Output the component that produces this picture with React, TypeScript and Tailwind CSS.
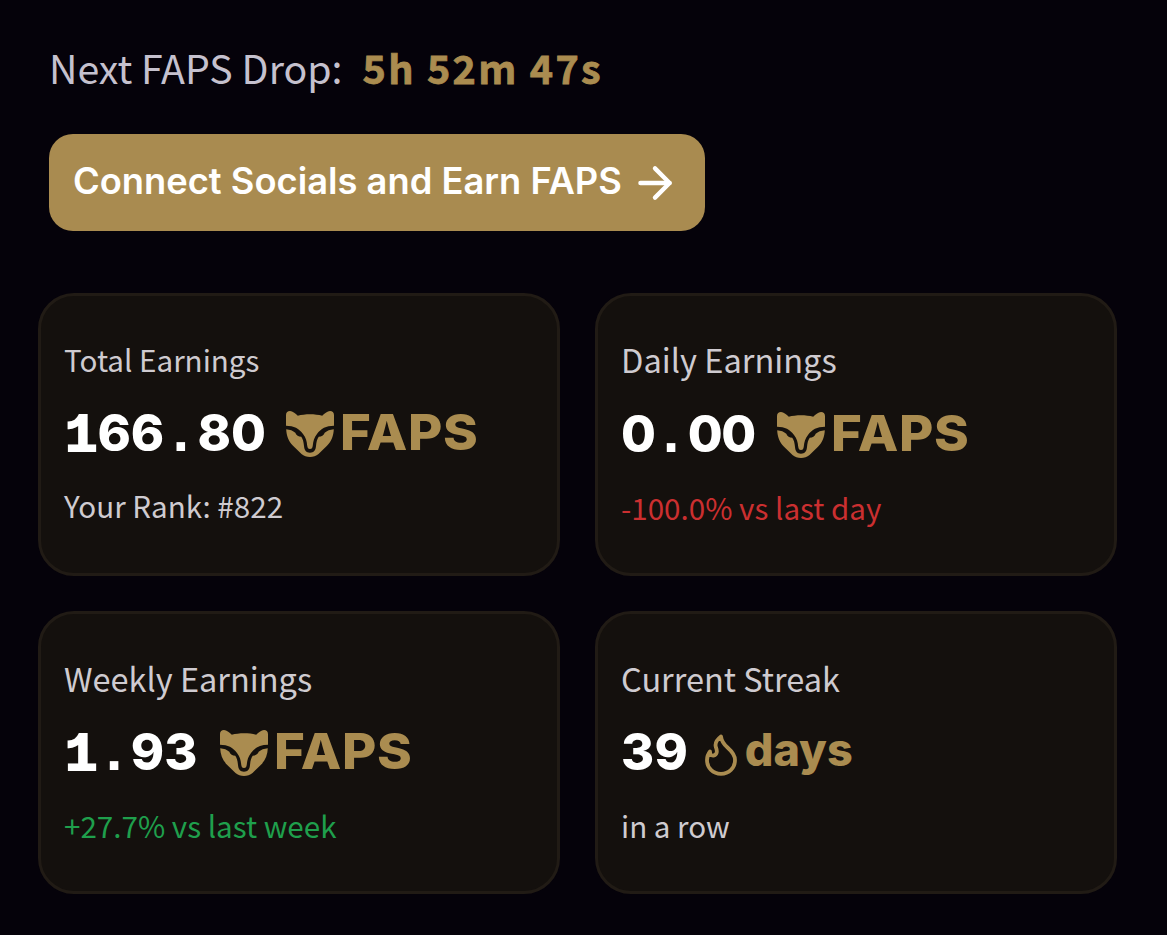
import React from 'react';
import { ArrowRight } from 'lucide-react';

interface Stat {
  label: string;
  labelClass: string;
  value: string;
  unit: 'FAPS' | 'days';
  note: string;
  noteClass: string;
  rowClass: string;
}

const STATS: Stat[] = [
  {
    label: 'Total Earnings',
    labelClass: 'text-[29.6px]',
    value: '166.80',
    unit: 'FAPS',
    note: 'Your Rank: #822',
    noteClass: 'text-[#cfcbd0] mt-[6px]',
    rowClass: 'mt-[18px]',
  },
  {
    label: 'Daily Earnings',
    labelClass: 'text-[32.6px] -mt-px',
    value: '0.00',
    unit: 'FAPS',
    note: '-100.0% vs last day',
    noteClass: 'text-[#cb2f30] mt-[7px]',
    rowClass: 'mt-[20px]',
  },
  {
    label: 'Weekly Earnings',
    labelClass: 'text-[32.5px]',
    value: '1.93',
    unit: 'FAPS',
    note: '+27.7% vs last week',
    noteClass: 'text-[#1f9f4c] mt-[7px]',
    rowClass: 'mt-[19px]',
  },
  {
    label: 'Current Streak',
    labelClass: 'text-[32.5px]',
    value: '39',
    unit: 'days',
    note: 'in a row',
    noteClass: 'text-[#cfcbd0] mt-[7px]',
    rowClass: 'mt-[19px]',
  },
];

const FoxIcon: React.FC = () => (
  <svg viewBox="0 0 48 46" className="w-12 h-[46px] shrink-0 mt-[2px]" fill="#aa8c50">
    <path d="M0 14.800V4C0 .5 3.500-.8 6.500.8 9 2.100 10.500 3.500 11.800 4.800c7-2 17.400-2 24.400 0C37.500 3.500 39 2.100 41.500.8 44.500-.8 48 .5 48 4v10.800C40 15 35 17.500 31 23c-3 4-3.700 7-4.200 11.500-.3 2.500-1 3.500-2.800 3.500s-2.500-1-2.800-3.500C20.700 30 20 27 17 23 13 17.500 8 15 0 14.800Z" />
    <path d="M.2 18.200c3.800.4 6.800 1.400 9.100 3.600 1 2.700 3.200 3.800 6 4 1.700 2.700 2.300 5.200 2.700 9.200.4 4.500 2.200 6.700 6 6.700s5.600-2.200 6-6.700c.4-4 1-6.500 2.700-9.200 2.800-.2 5-1.300 6-4 2.300-2.200 5.300-3.200 9.100-3.600-.2 6.300-2.300 12-6.800 16.500L32.500 43c-4.500 4-12.500 4-17 0L7 34.700C2.500 30.200.4 24.500.2 18.200Z" />
  </svg>
);

const FlameIcon: React.FC = () => (
  <svg
    viewBox="0 0 32 42"
    className="w-8 h-[42px] shrink-0 mt-[7px]"
    fill="none"
    stroke="#aa8c50"
    strokeWidth="3.8"
    strokeLinecap="round"
    strokeLinejoin="round"
  >
    <path d="M16 2.500C11.500 6 9.500 9.500 11 13.500c1.500 4 1 7.500-2.500 8C6 21.800 5 20 5 17.500 3 20 2 23 2 26c0 8 6 13.800 14 13.800S30 34 30 26c0-5-3-8.500-7.500-12.500C18.500 10 16.500 7 16 2.500Z" />
  </svg>
);

const charClass = (ch: string) => {
  if (ch === '1') return "font-['Liberation_Mono',monospace] font-bold text-[54px] [-webkit-text-stroke:2px_white] pl-px";
  if (ch === '.') return "font-['Liberation_Sans',sans-serif] font-bold text-[60px] leading-[40px]";
  return '';
};

// Every character sits in a cell of the same width, like a tabular readout
const Digits: React.FC<{ value: string }> = ({ value }) => (
  <span className="flex items-baseline text-[50.5px] leading-[60px] font-extrabold text-white">
    {value.split('').map((ch, i) => (
      <span key={i} className={`w-[33.4px] text-center ${charClass(ch)}`}>
        {ch}
      </span>
    ))}
  </span>
);

const StatCard: React.FC<{ stat: Stat }> = ({ stat }) => (
  <div className="h-[283px] rounded-[36px] border-3 border-[#211b15] bg-[#14100d] px-[23px] pt-[39px] overflow-hidden">
    <div className={`h-[50px] leading-[50px] whitespace-nowrap text-[#cfcbd0] ${stat.labelClass}`}>{stat.label}</div>
    <div className={`flex items-start h-[72px] font-['Inter',sans-serif] ${stat.rowClass}`}>
      <Digits value={stat.value} />
      {stat.unit === 'FAPS' ? (
        <div className="flex items-start ml-[22px] mt-[6px]">
          <FoxIcon />
          <span className="ml-[6px] -mt-[7px] origin-left scale-x-[1.055] text-[50px] leading-[60px] font-extrabold tracking-[0.6px] text-[#aa8c50]">
            FAPS
          </span>
        </div>
      ) : (
        <div className="flex items-start ml-[17px] mt-[5px]">
          <FlameIcon />
          <span className="ml-[8px] -mt-[7px] text-[45px] leading-[60px] font-extrabold text-[#aa8c50]">days</span>
        </div>
      )}
    </div>
    <div className={`h-[50px] leading-[50px] text-[29.6px] whitespace-nowrap ${stat.noteClass}`}>{stat.note}</div>
  </div>
);

const App: React.FC = () => {
  return (
    <div className="h-[935px] bg-[#05020a] pl-[38px] pr-[50px] pt-[37px] overflow-hidden font-['Noto_Sans_CJK_JP',sans-serif]">
      <div className="flex h-[60px] pl-[11px] leading-[60px] whitespace-nowrap">
        <span className="text-[39.3px] text-[#c5c1ce]">Next FAPS Drop:</span>
        <span className="ml-[20px] text-[39.5px] font-bold tracking-[2.3px] text-[#aa8c50] [-webkit-text-stroke:0.8px_#aa8c50]">
          5h 52m 47s
        </span>
      </div>

      <button className="flex items-center w-[656px] h-[97px] mt-[37px] ml-[11px] pl-[24px] rounded-[24px] bg-[#a98b50] text-white font-['Inter',sans-serif] text-[36.3px] font-semibold whitespace-nowrap">
        <span className="-mt-[2px]">Connect Socials and Earn FAPS</span>
        <ArrowRight className="w-[50px] h-[50px] ml-[8px]" strokeWidth={2.1} />
      </button>

      <div className="grid grid-cols-2 gap-[35px] mt-[62px]">
        {STATS.map((stat) => (
          <StatCard key={stat.label} stat={stat} />
        ))}
      </div>
    </div>
  );
};

export default App;
